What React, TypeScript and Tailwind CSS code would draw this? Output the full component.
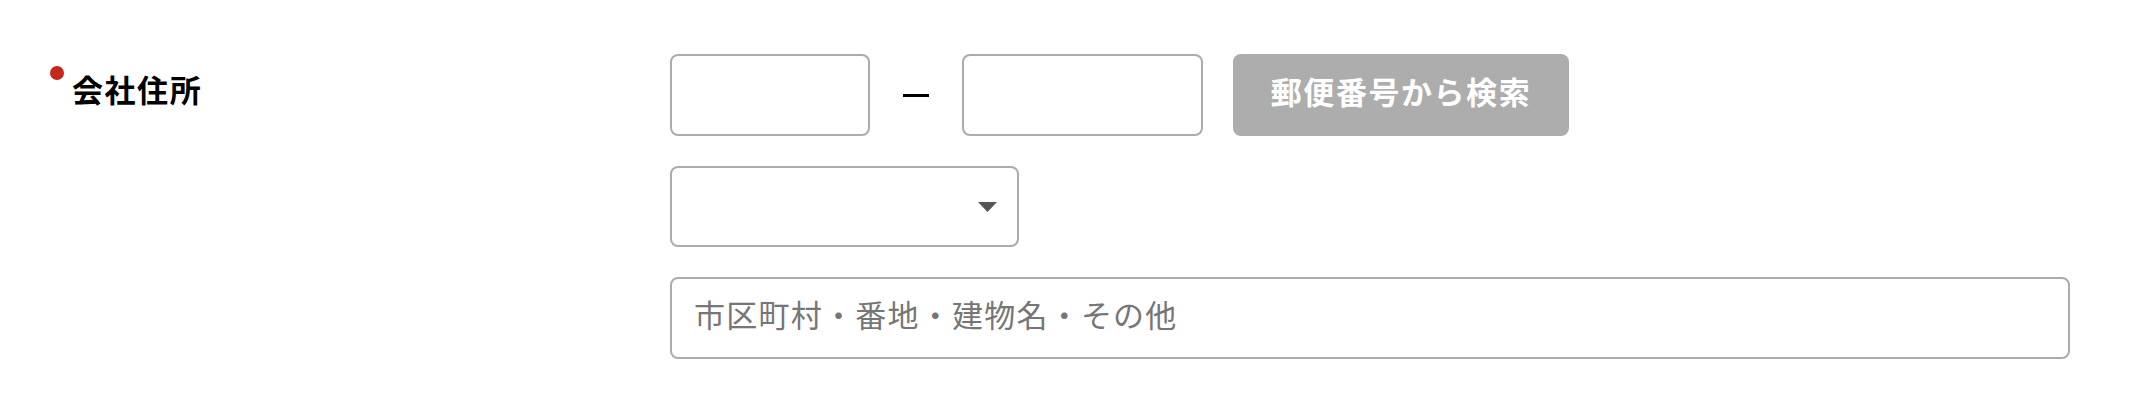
const font = "font-['Noto_Sans_CJK_JP','Noto_Sans',sans-serif]";

function CaretDown() {
  return (
    <svg aria-hidden="true" className="pointer-events-none absolute right-[20px] top-1/2 -translate-y-1/2" width="19" height="10" viewBox="0 0 19 10">
      <path d="M0 0h19L9.5 10z" fill="#555555" />
    </svg>
  );
}

export default function App() {
  return (
    <div className={`min-h-[420px] w-[2142px] bg-white ${font}`}>
      <div className="flex pl-[50px] pt-[54px]">
        <div className="flex w-[620px] shrink-0 items-start gap-[8px] pt-[12px]">
          <span className="h-[14px] w-[14px] shrink-0 rounded-full bg-[#c5281c]" />
          <span className="text-[31px] font-bold leading-[46px] tracking-[0.05em] text-black">
            会社住所
          </span>
        </div>

        <div className="flex flex-col gap-[30px]">
          <div className="flex items-center">
            <input
              className="h-[82px] w-[200px] rounded-[8px] border-2 border-[#acacac] bg-white px-[20px] text-[31px] outline-none"
              type="text"
            />
            <span className="mx-[33px] block h-[3px] w-[26px] bg-black" />
            <input
              className="h-[82px] w-[241px] rounded-[8px] border-2 border-[#acacac] bg-white px-[20px] text-[31px] outline-none"
              type="text"
            />
            <button
              className="ml-[30px] flex h-[82px] w-[336px] items-center justify-center rounded-[8px] bg-[#adadad] pb-[8px] text-[31px] font-bold tracking-[0.05em] text-white"
              type="button"
            >
              郵便番号から検索
            </button>
          </div>

          <div className="relative h-[81px] w-[349px] rounded-[8px] border-2 border-[#acacac] bg-white">
            <CaretDown />
          </div>

          <input
            className="h-[82px] w-[1400px] rounded-[8px] border-2 border-[#acacac] bg-white px-[22px] pb-[10px] text-[31px] tracking-[0.04em] text-black outline-none placeholder:text-[#767676]"
            placeholder="市区町村・番地・建物名・その他"
            type="text"
          />
        </div>
      </div>
    </div>
  );
}
